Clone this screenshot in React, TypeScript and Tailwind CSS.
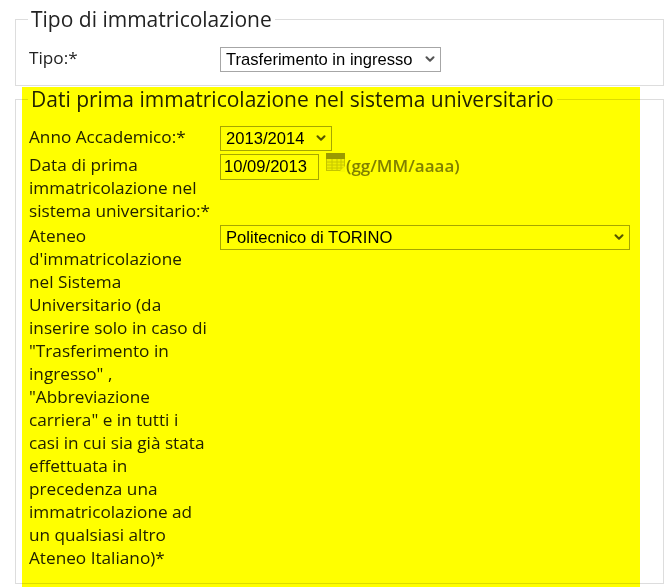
import { ChevronDown } from "lucide-react";

const labelFont = "font-['Open_Sans','Noto_Sans',sans-serif] text-[17.2px] leading-[23px] text-[#222]";
const legendFont = "-ml-[1px] px-[3px] font-['Open_Sans','Noto_Sans',sans-serif] text-[21px] leading-[19px] text-[#222]";
const fieldFont = "font-['Liberation_Sans',sans-serif] text-[16.6px] text-black bg-transparent border border-[#a6a6a6]";

const CalendarIcon = () => (
  <svg width="20" height="20" viewBox="0 0 20 20" className="shrink-0">
    <rect x="0.5" y="0.5" width="18" height="17" fill="#efefef" stroke="#c4c4c4" />
    <rect x="0.5" y="0.5" width="18" height="5" fill="#9a9a9a" stroke="#9a9a9a" />
    <path d="M1 9h17M1 12h17M1 15h17M6 6v11M11 6v11M15 6v11" stroke="#c8c8c8" strokeWidth="1" fill="none" />
    <path d="M13 19l6-6v6z" fill="#f8f8f8" />
  </svg>
);

const Select = ({ value, className }: { value: string; className: string }) => (
  <div className={`relative mt-[1px] h-[25px] shrink-0 ${className}`}>
    <select className={`${fieldFont} h-full w-full appearance-none pl-[5px]`} defaultValue={value}>
      <option value={value}>{value}</option>
    </select>
    <ChevronDown
      size={14}
      strokeWidth={3.5}
      className="pointer-events-none absolute right-[4px] top-[5px] text-[#555]"
    />
  </div>
);

const App = () => {
  return (
    <div className="relative h-[587px] w-[672px] overflow-hidden bg-white">
      {/* Tipo */}
      <fieldset className="mx-[15px] mt-[10px] h-[76px] w-[649px] border border-[#ddd] pl-[13px] pr-3">
        <legend className={legendFont}>Tipo di immatricolazione</legend>
        <div className="mt-[17px] flex">
          <label className={`w-[191px] shrink-0 ${labelFont}`}>Tipo:*</label>
          <Select value="Trasferimento in ingresso" className="w-[221px]" />
        </div>
      </fieldset>

      {/* Dati prima immatricolazione */}
      <fieldset className="mx-[15px] mt-[4px] h-[494px] w-[649px] border border-[#ddd] pl-[13px] pr-3">
        <legend className={legendFont}>Dati prima immatricolazione nel sistema universitario</legend>
        <div className="mt-[16px] flex flex-col gap-[2px]">
          <div className="flex">
            <label className={`w-[191px] shrink-0 ${labelFont}`}>Anno Accademico:*</label>
            <Select value="2013/2014" className="w-[112px]" />
          </div>
          <div className="flex">
            <label className={`w-[191px] shrink-0 ${labelFont}`}>
              Data di prima immatricolazione nel sistema universitario:*
            </label>
            <div className="mt-[1px] flex items-start">
              <input
                type="text"
                defaultValue="10/09/2013"
                className={`${fieldFont} h-[26px] w-[99px] px-[3px]`}
              />
              <div className="ml-[7px] mt-[-1px]">
                <CalendarIcon />
              </div>
              <span className="font-['Open_Sans','Noto_Sans',sans-serif] text-[17px] font-semibold leading-[23px] text-[#808080]">
                (gg/MM/aaaa)
              </span>
            </div>
          </div>
          <div className="flex">
            <label className={`w-[180px] shrink-0 ${labelFont}`}>
              Ateneo d'immatricolazione nel Sistema Universitario (da inserire solo in caso di "Trasferimento in
              ingresso" , "Abbreviazione carriera" e in tutti i casi in cui sia già stata effettuata in precedenza una
              immatricolazione ad un qualsiasi altro Ateneo Italiano)*
            </label>
            <Select value="Politecnico di TORINO" className="ml-[11px] w-[410px]" />
          </div>
        </div>
      </fieldset>

      {/* highlight over the second block */}
      <div className="pointer-events-none absolute left-[22px] top-[87px] h-[500px] w-[618px] bg-[#ffff00] mix-blend-multiply" />
    </div>
  );
};

export default App;
